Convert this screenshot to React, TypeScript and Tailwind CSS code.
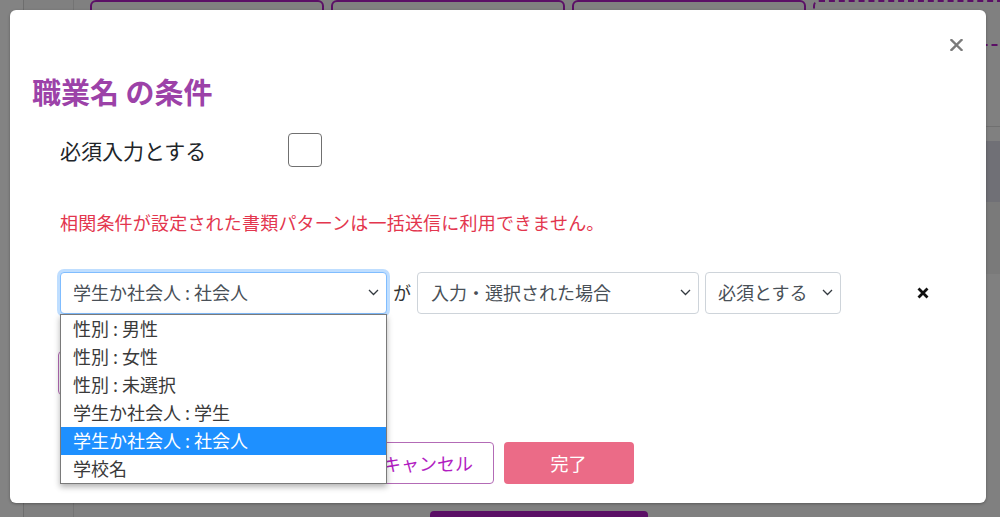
import React from 'react';

const options = [
  '性別 : 男性',
  '性別 : 女性',
  '性別 : 未選択',
  '学生か社会人 : 学生',
  '学生か社会人 : 社会人',
  '学校名',
];

function Chevron() {
  return (
    <svg width="11" height="7" viewBox="0 0 11 7" className="shrink-0">
      <path d="M1 1l4.5 4.5L10 1" fill="none" stroke="#343a40" strokeWidth="1.3" />
    </svg>
  );
}

function Backdrop() {
  return (
    <div className="flex h-[517px] w-[1000px] bg-[#808080] overflow-hidden">
      <div className="w-[24px] shrink-0 border-r border-[#6e6e6e] bg-[#838383]" />
      <div className="w-[50px] shrink-0 border-r border-[#747474]" />
      <div className="flex-1 flex flex-col">
        <div className="flex gap-[7px] pl-[16px] h-[46px]">
          <div className="w-[234px] h-[46px] rounded-[6px] border-2 border-[#5b0f66]" />
          <div className="w-[234px] h-[46px] rounded-[6px] border-2 border-[#5b0f66]" />
          <div className="w-[234px] h-[46px] rounded-[6px] border-2 border-[#5b0f66]" />
          <div className="flex-1 h-[46px] rounded-l-[6px] border-2 border-r-0 border-dashed border-[#5b0f66]" />
        </div>
        <div className="mt-[80px] border-t border-[#707070] h-[15px]" />
        <div className="h-[61px] bg-[#707076]" />
        <div className="h-[72px] bg-[#7a7a7a]" />
        <div className="flex-1 flex items-end pl-[356px]">
          <div className="w-[218px] h-[6px] rounded-t-[4px] bg-[#5b0f66]" />
        </div>
      </div>
    </div>
  );
}

export default function App() {
  return (
    <div className="relative w-[1000px] h-[517px] overflow-hidden font-['Noto_Sans_CJK_JP','Noto_Sans',sans-serif]">
      <Backdrop />

      <div className="absolute left-[10px] top-[10px] w-[976px] h-[493px] bg-white rounded-[6px] shadow-[0_1px_3px_rgba(0,0,0,0.3)]">
        <button className="absolute right-[23px] top-[29px] w-[13px] h-[12px] flex items-center justify-center">
          <svg width="13" height="12" viewBox="0 0 13 12">
            <path d="M1.5 1l10 10M11.5 1l-10 10" stroke="#7b7b7b" strokeWidth="2.4" strokeLinecap="square" />
          </svg>
        </button>

        <div className="pt-[61px] pl-[22px]">
          <h1 className="text-[29px] leading-[40px] font-bold text-[#9c42a8]">職業名 の条件</h1>
        </div>

        <div className="pl-[50px]">
          <div className="flex items-center mt-[22px] h-[34px]">
            <span className="w-[228px] text-[21px] text-[#212529] leading-[34px]">必須入力とする</span>
            <div className="w-[34px] h-[34px] rounded-[4px] border border-[#707070] bg-white" />
          </div>

          <p className="mt-[42px] text-[18px] leading-[26px] text-[#e3364e] tracking-[0.2px]">
            相関条件が設定された書類パターンは一括送信に利用できません。
          </p>

          <div className="flex items-center mt-[37px] h-[42px]">
            <div className="relative w-[327px] h-[42px]">
              <div className="h-full flex items-center justify-between pl-[12px] pr-[7px] pb-[2px] rounded-[4px] border border-[#80bdff] shadow-[0_0_0_3px_rgba(0,123,255,0.25)] bg-white">
                <span className="text-[18px] text-[#495057]">学生か社会人 : 社会人</span>
                <Chevron />
              </div>
              <ul className="absolute left-0 top-full z-10 w-[327px] bg-white border border-[#7a7a7a] shadow-[0_3px_6px_rgba(0,0,0,0.3)]">
                {options.map((o, i) => (
                  <li
                    key={o}
                    className={`h-[28px] leading-[26px] pl-[12px] text-[18px] ${i === 4 ? 'bg-[#1e90ff] text-white' : 'text-[#3a3a3a]'}`}
                  >
                    {o}
                  </li>
                ))}
              </ul>
            </div>
            <span className="mx-[6px] pb-[2px] text-[18px] text-[#333]">が</span>
            <div className="w-[282px] h-[42px] flex items-center justify-between pl-[13px] pr-[7px] pb-[2px] rounded-[4px] border border-[#ced4da]">
              <span className="text-[18px] text-[#495057]">入力・選択された場合</span>
              <Chevron />
            </div>
            <div className="ml-[6px] w-[136px] h-[42px] flex items-center justify-between pl-[12px] pr-[7px] pb-[2px] rounded-[4px] border border-[#ced4da]">
              <span className="text-[18px] text-[#495057]">必須とする</span>
              <Chevron />
            </div>
            <button className="ml-[76px] w-[12px] h-[12px] flex items-center justify-center">
              <svg width="12" height="12" viewBox="0 0 12 12">
                <path d="M1.5 1.5l9 9M10.5 1.5l-9 9" stroke="#111" strokeWidth="2.8" />
              </svg>
            </button>
          </div>

          <div className="mt-[37px] -ml-[2px] w-[220px] h-[44px] rounded-[4px] border border-[#b36bb6]" />
        </div>

        <div className="flex justify-center gap-[10px] mt-[47px]">
          <button className="w-[131px] h-[42px] rounded-[4px] border border-[#b36bb6] bg-white text-[18px] text-[#b21dc2]">キャンセル</button>
          <button className="w-[130px] h-[42px] rounded-[4px] bg-[#eb6b87] text-[18px] text-white">完了</button>
        </div>
      </div>
    </div>
  );
}
